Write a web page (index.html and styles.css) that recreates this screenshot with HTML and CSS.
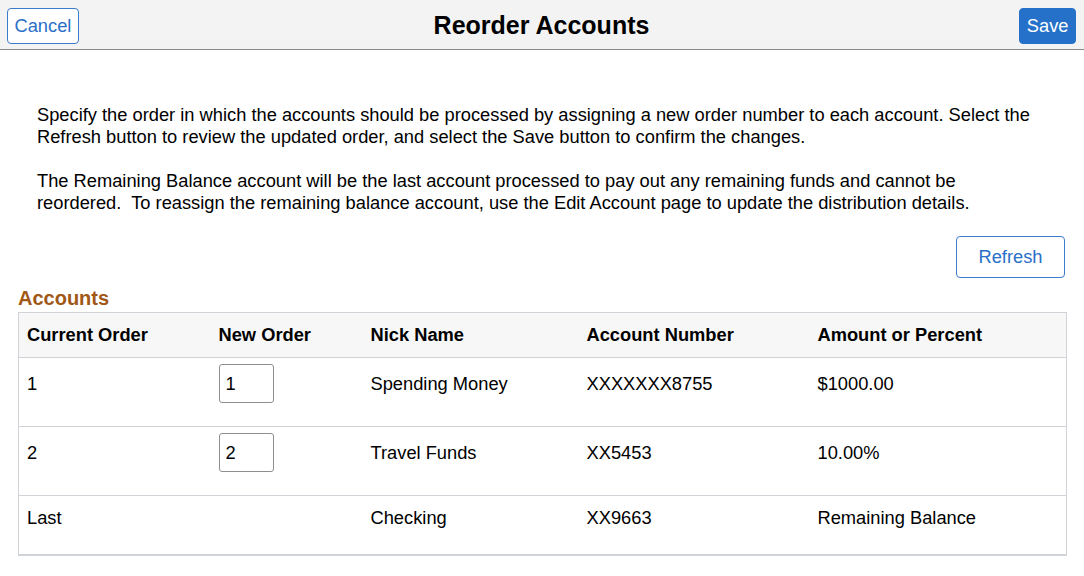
FILE: index.html
```html
<!DOCTYPE html>
<html lang="en">
<head>
<meta charset="utf-8">
<title>Reorder Accounts</title>
<link rel="stylesheet" href="styles.css">
</head>
<body>
<header class="topbar">
  <div class="bar-left"><button class="btn btn-outline btn-small" type="button">Cancel</button></div>
  <h1 class="title">Reorder Accounts</h1>
  <div class="bar-right"><button class="btn btn-primary btn-small" type="button">Save</button></div>
</header>
<main class="content">
  <section class="intro">
    <p>Specify the order in which the accounts should be processed by assigning a new order number to each account. Select the Refresh button to review the updated order, and select the Save button to confirm the changes.</p>
    <p>The Remaining Balance account will be the last account processed to pay out any remaining funds and cannot be reordered.&nbsp; To reassign the remaining balance account, use the Edit Account page to update the distribution details.</p>
  </section>
  <div class="actions">
    <button class="btn btn-outline btn-large" type="button">Refresh</button>
  </div>
  <h2 class="section-title">Accounts</h2>
  <table class="grid">
    <colgroup>
      <col class="c1"><col class="c2"><col class="c3"><col class="c4"><col class="c5">
    </colgroup>
    <thead>
      <tr>
        <th>Current Order</th>
        <th>New Order</th>
        <th>Nick Name</th>
        <th>Account Number</th>
        <th>Amount or Percent</th>
      </tr>
    </thead>
    <tbody>
      <tr class="row">
        <td><div class="cell">1</div></td>
        <td><div class="cell"><input class="order-input" type="text" value="1"></div></td>
        <td><div class="cell">Spending Money</div></td>
        <td><div class="cell">XXXXXXX8755</div></td>
        <td><div class="cell">$1000.00</div></td>
      </tr>
      <tr class="row">
        <td><div class="cell">2</div></td>
        <td><div class="cell"><input class="order-input" type="text" value="2"></div></td>
        <td><div class="cell">Travel Funds</div></td>
        <td><div class="cell">XX5453</div></td>
        <td><div class="cell">10.00%</div></td>
      </tr>
      <tr class="row row-last">
        <td><div class="cell">Last</div></td>
        <td><div class="cell"></div></td>
        <td><div class="cell">Checking</div></td>
        <td><div class="cell">XX9663</div></td>
        <td><div class="cell">Remaining Balance</div></td>
      </tr>
    </tbody>
  </table>
</main>
</body>
</html>
```

FILE: styles.css
```css
* { box-sizing: border-box; }

html, body {
  margin: 0;
  padding: 0;
  background: #ffffff;
  font-family: "Liberation Sans", Arial, sans-serif;
  color: #000000;
}

.topbar {
  height: 50px;
  background: #f3f3f3;
  border-bottom: 1px solid #8a8a8a;
  display: grid;
  grid-template-columns: 1fr auto 1fr;
  align-items: start;
  padding: 8px 8px 0 7px;
}

.bar-left { display: flex; justify-content: flex-start; }
.bar-right { display: flex; justify-content: flex-end; }

.title {
  margin: 0;
  padding-top: 2px;
  font-size: 25px;
  line-height: 30px;
  font-weight: bold;
  color: #000;
}

.btn {
  font-family: "Liberation Sans", Arial, sans-serif;
  font-size: 18.3px;
  border-radius: 4px;
  cursor: pointer;
  margin: 0;
}

.btn-small {
  height: 36px;
  padding: 0 6.5px;
  line-height: 34px;
}

.btn-outline {
  background: #ffffff;
  color: #2a6fc7;
  border: 1px solid #3c7bcc;
}

.btn-primary {
  background: #2571ca;
  color: #ffffff;
  border: 1px solid #2571ca;
}

.content {
  padding: 0 18px;
}

.intro {
  padding: 54px 30px 0 19px;
  font-size: 18.3px;
  line-height: 22px;
}

.intro p {
  margin: 0 0 22px 0;
}

.intro p:last-child {
  margin-bottom: 0;
}

.actions {
  display: flex;
  justify-content: flex-end;
  padding-top: 22px;
  padding-right: 1px;
}

.btn-large {
  width: 109px;
  height: 42px;
  padding: 0;
}

.section-title {
  margin: 8px 0 2px 0;
  font-size: 20px;
  line-height: 24px;
  font-weight: bold;
  color: #a15817;
}

.grid {
  width: 1048px;
  table-layout: fixed;
  border-collapse: collapse;
  border: 1px solid #d0d4d9;
  border-bottom: 2px solid #d0d4d9;
  font-size: 18.3px;
}

.c1 { width: 192px; }
.c2 { width: 152px; }
.c3 { width: 216px; }
.c4 { width: 231px; }
.c5 { width: 257px; }

.grid th {
  background: #f7f7f7;
  text-align: left;
  font-weight: bold;
  padding: 12px 9px 12px 8px;
  line-height: 20px;
  border-bottom: 1px solid #d0d4d9;
}

.grid td {
  vertical-align: top;
  padding: 6px 9px 23px 8px;
  border-bottom: 1px solid #d0d4d9;
}

.cell {
  height: 39px;
  display: flex;
  align-items: center;
  line-height: 22px;
}

.row-last td {
  padding: 11px 9px 25px 8px;
}

.row-last .cell {
  height: 22px;
}

.order-input {
  width: 55px;
  height: 39px;
  border: 1px solid #8e8e8e;
  border-radius: 3px;
  padding: 0 6px;
  font-family: "Liberation Sans", Arial, sans-serif;
  font-size: 18.3px;
  color: #000;
  background: #fff;
}
```
